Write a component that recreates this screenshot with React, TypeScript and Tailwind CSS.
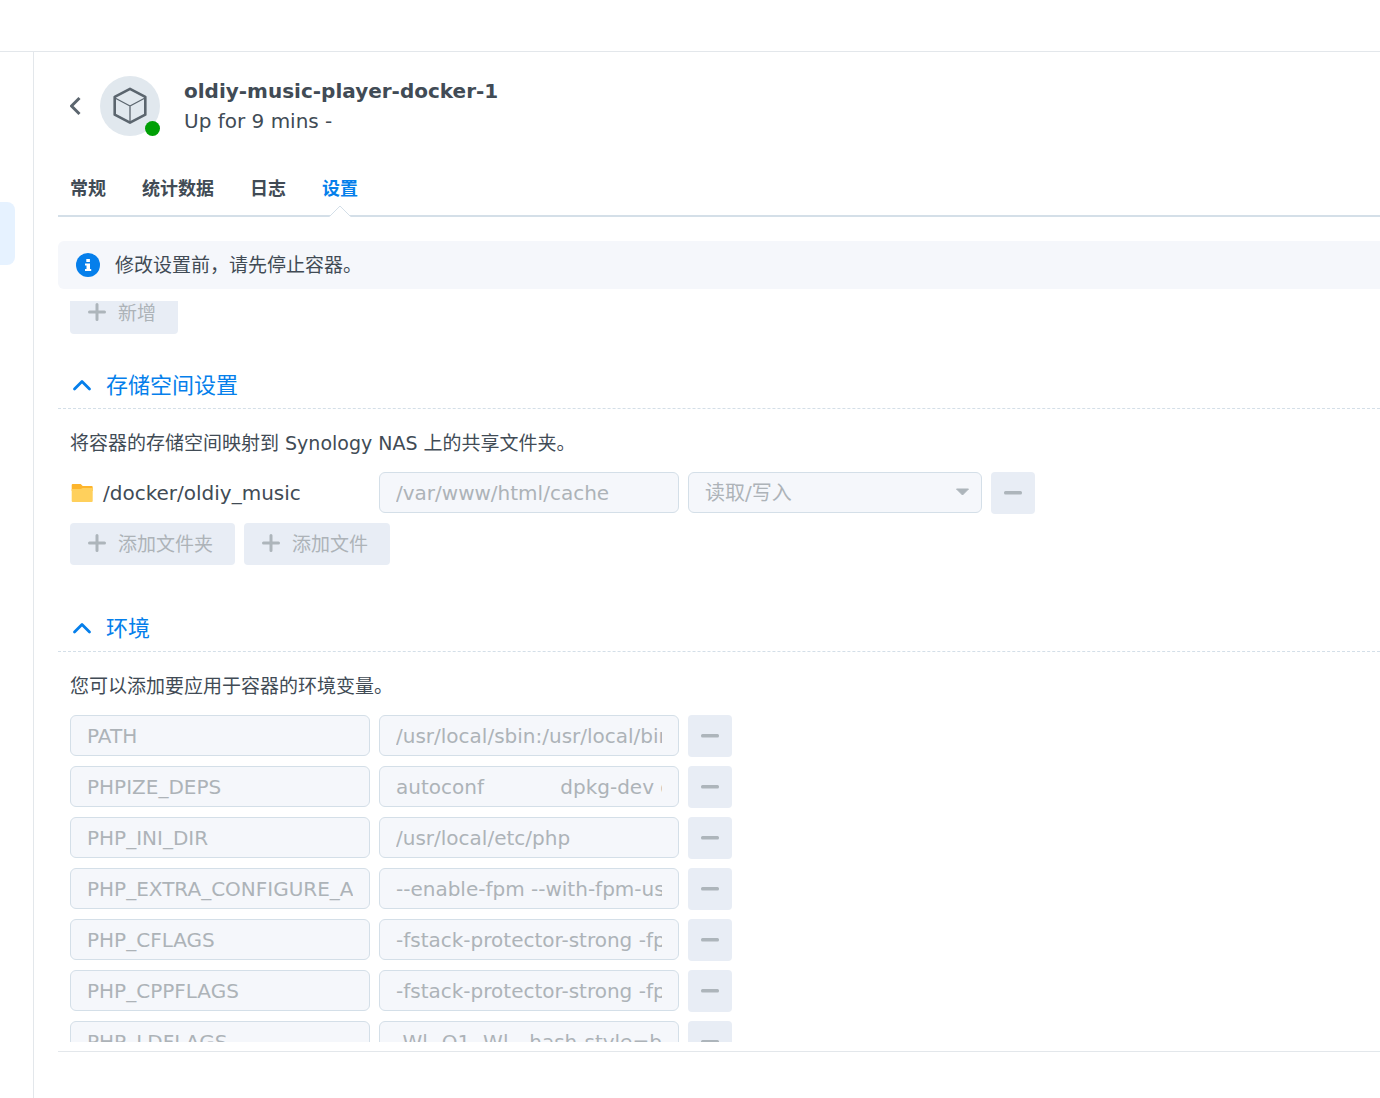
interface EnvVariable {
    name: string;
    value: string;
}

const TABS = ['常规', '统计数据', '日志', '设置'];
const ACTIVE_TAB = '设置';

const ENV_VARIABLES: EnvVariable[] = [
    { name: 'PATH', value: '/usr/local/sbin:/usr/local/bin:/usr/sbin:/usr/bin:/sbin:/bin' },
    { name: 'PHPIZE_DEPS', value: 'autoconf            dpkg-dev dpkg-dev' },
    { name: 'PHP_INI_DIR', value: '/usr/local/etc/php' },
    { name: 'PHP_EXTRA_CONFIGURE_ARGS', value: '--enable-fpm --with-fpm-user=www-data' },
    { name: 'PHP_CFLAGS', value: '-fstack-protector-strong -fpic -fpie -O2' },
    { name: 'PHP_CPPFLAGS', value: '-fstack-protector-strong -fpic -fpie -O2' },
    { name: 'PHP_LDFLAGS', value: '-Wl,-O1 -Wl,--hash-style=both -pie' },
];

function ContainerAvatar() {
    return (
        <div className="relative ml-4 h-15 w-15 shrink-0 rounded-full bg-[#e1e8ee]">
            <svg className="h-15 w-15" viewBox="0 0 60 60" fill="none" stroke="#5b656e" strokeLinejoin="round">
                <path d="M30 12.8 45.300 20.800v17.900L30 46.600 14.700 38.700V20.800z" strokeWidth="2.6" />
                <path d="M15 22l15 8 15-8M30 30v16" strokeWidth="1.3" />
            </svg>
            <span className="absolute right-0 bottom-0 h-[15px] w-[15px] rounded-full bg-[#009f05]" />
        </div>
    );
}

function Header() {
    return (
        <div className="flex h-15 items-center pl-3">
            <button type="button" aria-label="返回" className="w-[14px]">
                <svg width="14" height="20" viewBox="0 0 14 20" fill="none" stroke="#5b656e" strokeWidth="3">
                    <path d="M9.500 2 1.500 10l8 8" strokeLinejoin="round" />
                </svg>
            </button>
            <ContainerAvatar />
            <div className="ml-6">
                <h1 className="text-[20px] leading-[30px] font-bold">oldiy-music-player-docker-1</h1>
                <p className="text-[20px] leading-[30px]">Up for 9 mins -</p>
            </div>
        </div>
    );
}

function Tabs() {
    return (
        <nav className="mt-6 flex h-[57px] gap-9 border-b-2 border-[#d4dfe8] pl-3">
            {TABS.map((tab) => (
                <button
                    key={tab}
                    type="button"
                    className={
                        tab === ACTIVE_TAB
                            ? 'relative h-14 text-[18px] font-bold text-[#057feb]'
                            : 'h-14 text-[18px] font-bold'
                    }
                >
                    {tab}
                    {tab === ACTIVE_TAB && (
                        <svg className="absolute -bottom-px left-1/2 -ml-[11px]" width="22" height="12" viewBox="0 0 22 12">
                            <path d="M0 12 11 1l11 11z" fill="#fff" />
                            <path d="M0 11h1L11 1l10 10h1" fill="none" stroke="#d4dfe8" />
                        </svg>
                    )}
                </button>
            ))}
        </nav>
    );
}

function InfoBanner() {
    return (
        <div className="mt-6 flex h-12 shrink-0 items-center rounded-l-md bg-[#f5f7fb] pl-[18px]">
            <svg width="24" height="24" viewBox="0 0 24 24">
                <circle cx="12" cy="12" r="12" fill="#057feb" />
                <path d="M10.3 6h3.6v3h-3.6zM9 10.5h5V16h1.2v2H9v-2h1.5v-3.5H9z" fill="#fff" />
            </svg>
            <p className="ml-[15px] text-[19px]">修改设置前，请先停止容器。</p>
        </div>
    );
}

function SectionTitle({ title }: { title: string }) {
    return (
        <h2 className="h-[45px] border-b border-dashed border-[#d4dfe8] pl-[14px] text-[#057feb]">
            <button type="button" className="flex h-[42px] items-center text-[22px]">
                <svg width="20" height="14" viewBox="0 0 20 14" fill="none" stroke="currentColor" strokeWidth="2.8">
                    <path d="M2.500 11 10 3.500l7.500 7.500" strokeLinecap="round" strokeLinejoin="round" />
                </svg>
                <span className="ml-[14px]">{title}</span>
            </button>
        </h2>
    );
}

function AddButton({ label }: { label: string }) {
    return (
        <button
            type="button"
            disabled
            className="flex h-[42px] items-center gap-3 rounded-[4px] bg-[#e8edf5] pr-[22px] pl-[18px] text-[19px] text-[#adb3b8]"
        >
            <svg width="18" height="20" viewBox="0 0 18 20" fill="none" stroke="#adb5bb" strokeWidth="3" strokeLinecap="round">
                <path d="M9 1.5v15M1.5 9h15" />
            </svg>
            {label}
        </button>
    );
}

function RemoveButton() {
    return (
        <button
            type="button"
            disabled
            aria-label="删除"
            className="flex h-[42px] w-11 items-center justify-center rounded-[4px] bg-[#e8edf5]"
        >
            <svg width="18" height="4" viewBox="0 0 18 4">
                <rect width="18" height="3.400" rx="1.5" fill="#adb5bb" />
            </svg>
        </button>
    );
}

function TextBox({ label, value }: { label: string; value: string }) {
    return (
        <input
            type="text"
            aria-label={label}
            defaultValue={value}
            disabled
            className="h-[41px] w-[300px] rounded-md border border-[#d4dfe8] bg-[#f5f7fb] px-4 text-[20px] text-[#adb3b8]"
        />
    );
}

function StorageSection() {
    return (
        <section className="mt-[30px]">
            <SectionTitle title="存储空间设置" />
            <div className="pl-3">
                <p className="mt-4 text-[19px] leading-9">将容器的存储空间映射到 Synology NAS 上的共享文件夹。</p>
                <div className="mt-[11px] flex gap-[9px]">
                    <div className="flex h-[42px] w-[300px] items-center text-[20px]">
                        <svg width="24" height="20" viewBox="0 0 24 20">
                            <path d="M1.700 2a1 1 0 0 1 1-1h8l2 2h9a1 1 0 0 1 1 1v4h-21z" fill="#fdb52c" />
                            <path d="M1.700 6h9l2-1h10v13a1 1 0 0 1-1 1h-19a1 1 0 0 1-1-1z" fill="#ffd05c" />
                        </svg>
                        <span className="ml-[9px]">/docker/oldiy_music</span>
                    </div>
                    <TextBox label="装载路径" value="/var/www/html/cache" />
                    <div className="relative h-[41px] w-[294px]">
                        <select
                            aria-label="权限"
                            disabled
                            className="h-full w-full appearance-none rounded-md border border-[#d4dfe8] bg-[#f5f7fb] px-4 text-[20px] text-[#adb3b8] opacity-100"
                        >
                            <option>读取/写入</option>
                        </select>
                        <svg className="absolute top-4 right-[13px]" width="13" height="8" viewBox="0 0 13 8">
                            <path d="M.5 1h12l-6 6z" fill="#adb5bb" stroke="#adb5bb" strokeLinejoin="round" />
                        </svg>
                    </div>
                    <RemoveButton />
                </div>
                <div className="mt-[9px] flex gap-[9px] pb-3">
                    <AddButton label="添加文件夹" />
                    <AddButton label="添加文件" />
                </div>
            </div>
        </section>
    );
}

function EnvironmentSection() {
    return (
        <section className="mt-[30px]">
            <SectionTitle title="环境" />
            <div className="pl-3">
                <p className="mt-4 text-[19px] leading-9">您可以添加要应用于容器的环境变量。</p>
                <div className="mt-[11px] flex flex-col gap-[9px]">
                    {ENV_VARIABLES.map((variable) => (
                        <div key={variable.name} className="flex gap-[9px]">
                            <TextBox label="变量" value={variable.name} />
                            <TextBox label="值" value={variable.value} />
                            <RemoveButton />
                        </div>
                    ))}
                </div>
            </div>
        </section>
    );
}

export default function App() {
    return (
        <div className="flex h-screen flex-col overflow-hidden bg-white font-['DejaVu_Sans','Noto_Sans_CJK_SC',sans-serif] text-[#414b55]">
            <header className="h-13 shrink-0 border-b border-[#e3e7eb]" />
            <div className="flex min-h-0 flex-1">
                <aside className="w-[34px] shrink-0 border-r border-[#e3e7eb] pt-[150px]">
                    <div className="h-[63px] w-[15px] rounded-r-lg bg-[#e6f2ff]" />
                </aside>
                <main className="flex min-w-0 flex-1 flex-col pt-6 pl-6">
                    <Header />
                    <Tabs />
                    <InfoBanner />
                    <div className="mt-3 min-h-0 flex-1 overflow-hidden">
                        <div className="-mt-[9px] flex pl-3">
                            <AddButton label="新增" />
                        </div>
                        <StorageSection />
                        <EnvironmentSection />
                    </div>
                    <footer className="mt-[9px] h-[47px] shrink-0 border-t border-[#e3e7eb]" />
                </main>
            </div>
        </div>
    );
}
